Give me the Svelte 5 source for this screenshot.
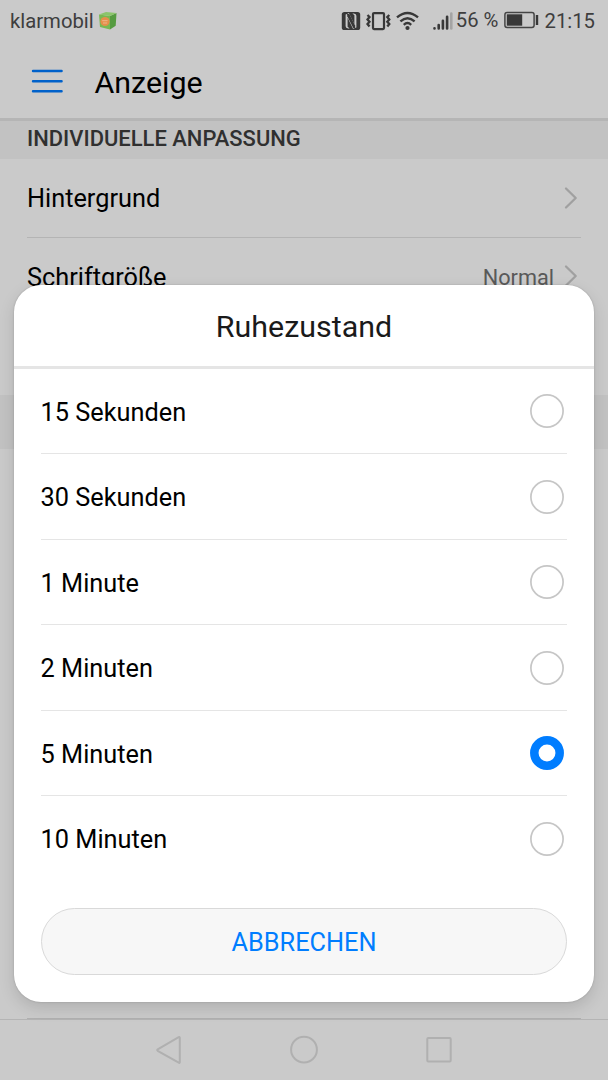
<script>
  const options = ['15 Sekunden', '30 Sekunden', '1 Minute', '2 Minuten', '5 Minuten', '10 Minuten'];
  let selected = $state('5 Minuten');
</script>

{#snippet chevron()}
  <svg class="chevron" width="14" height="24" viewBox="0 0 14 24"><path d="M2 2.500 11.700 12 2 21.500" fill="none" stroke="#a0a0a0" stroke-width="2.300" stroke-linecap="round" stroke-linejoin="round" /></svg>
{/snippet}

<div class="screen">
  <header class="status">
    <span class="carrier">klarmobil</span>
    <svg class="box" width="20" height="20" viewBox="0 0 20 20">
      <path d="M1 3.500 12 5v13.500L2 16z" fill="#78b852" />
      <path d="M12 5l6.500-3-.8 12.800-5.700 3.700z" fill="#559b40" />
      <path d="M1 3.500 8 1l10.500 1L12 5z" fill="#8bc56a" />
      <circle cx="7" cy="10.500" r="4.600" fill="#e58f4b" />
      <path d="M4.200 9.700h5.400M5 12h4.200" stroke="#edb88c" stroke-width="1" />
    </svg>
    <svg class="nfc" width="20" height="20" viewBox="0 0 20 20">
      <rect x=".8" y="1" width="18.400" height="18" rx="2.600" fill="#383838" />
      <path d="M4.600 3.500v11.700q0 1.800 2.600 2.300h1.400l-2-1.800V6.800l5.400 10.900 1.300.1V17L5.900 3zM15.400 16.500V4.800q0-1.800-2.600-2.300h-1.400l2 1.800v8.900L8 2.300l-1.300-.1V3l7.400 14z" fill="#cacaca" />
      <path d="M6.300 3h2l5.800 11.500v2.700h-1.700L6.300 5.300z" fill="#383838" />
    </svg>
    <svg class="vibrate" width="25" height="20" viewBox="0 0 25 20" fill="none" stroke="#383838">
      <rect x="7" y="2.100" width="11" height="16" rx="1" stroke-width="2.200" />
      <path d="M1.500 4 3.500 6 1.500 8.500 3.500 10.800 1.500 13 3.500 15.500M23.300 4 21.300 6 23.300 8.500 21.300 10.800 23.300 13 21.300 15.500" stroke-width="2.300" />
    </svg>
    <svg class="wifi" width="23" height="20" viewBox="0 0 23 20" fill="none" stroke="#383838" stroke-width="2.400">
      <path d="M1 6.300Q11.500-2.400 22 6.300M4.400 10.300Q11.500 4 18.600 10.300M7.800 13.800Q11.500 10.400 15.200 13.800" />
      <circle cx="11.500" cy="17" r="2.100" fill="#383838" stroke="none" />
    </svg>
    <svg class="signal" width="20" height="20" viewBox="0 0 20 20" stroke-width="2.600" stroke-linecap="round">
      <path d="M1.500 17.300v.2M5.700 14v3.500M9.900 9.800v7.700M14.100 5.800v11.700" stroke="#383838" />
      <path d="M18.300 2.500v15" stroke="#a4a4a4" />
    </svg>
    <span class="percent">56 %</span>
    <svg class="battery" width="35" height="18" viewBox="0 0 35 18">
      <rect x=".9" y="1.500" width="29.200" height="15" rx="2.200" fill="none" stroke="#454545" stroke-width="1.500" />
      <rect x="2.800" y="3.300" width="15.400" height="11.400" fill="#383838" />
      <path d="M33 4v10" stroke="#383838" stroke-width="2.400" />
    </svg>
    <span class="clock">21:15</span>
  </header>

  <div class="appbar">
    <svg class="burger" width="32" height="26" viewBox="0 0 32 26"><path d="M2 3h28.600M2 13.200h28.600M2 23.300h28.600" stroke="#0061ca" stroke-width="2.400" stroke-linecap="round" /></svg>
    <h1>Anzeige</h1>
  </div>

  <main>
    <h2>INDIVIDUELLE ANPASSUNG</h2>
    <div class="item"><span class="label">Hintergrund</span>{@render chevron()}</div>
    <div class="item"><span class="label">Schriftgröße</span><span class="value">Normal</span>{@render chevron()}</div>
    <div class="item blank"></div>
    <div class="band"></div>
    <div class="rest"></div>
  </main>

  <nav>
    <svg width="28" height="30" viewBox="0 0 28 30"><path d="M24.800 2.800v24.200q0 1.300-1.100.7L2.700 15.800q-1-.8 0-1.500L23.700 2.100q1.100-.6 1.100.7z" /></svg>
    <svg width="28" height="30" viewBox="0 0 28 30"><circle cx="14" cy="14.700" r="12.900" /></svg>
    <svg width="28" height="30" viewBox="0 0 28 30"><rect x="2.300" y="3" width="23.400" height="23.400" rx="1" /></svg>
  </nav>

  <div class="dialog" role="dialog" aria-labelledby="dialog-title">
    <div class="title" id="dialog-title">Ruhezustand</div>
    <div class="options" role="radiogroup" aria-labelledby="dialog-title">
      {#each options as option}
        <button class="option" role="radio" aria-checked={selected === option} onclick={() => (selected = option)}>
          <span class="label">{option}</span>
          <svg class="radio" class:on={selected === option} width="36" height="36" viewBox="0 0 36 36">
            <circle cx="18" cy="18" r={selected === option ? 12.7 : 16.1} />
          </svg>
        </button>
      {/each}
    </div>
    <button class="cancel"><span class="label">ABBRECHEN</span></button>
  </div>
</div>

<style>
  :global(body) { margin: 0; }
  .screen {
    position: relative;
    box-sizing: border-box;
    width: 608px;
    height: 1080px;
    overflow: hidden;
    display: flex;
    flex-direction: column;
    background: #cacaca;
    color: #000;
    font-family: Roboto, sans-serif;
  }
  .status {
    display: flex;
    align-items: center;
    height: 41px;
    padding: 0 13px 0 10px;
    box-sizing: border-box;
    font-size: 20.3px;
    color: #3e3e3e;
    white-space: nowrap;
    flex: none;
  }
  .status svg { flex: none; }
  .box { margin-left: 4px; }
  .nfc { margin-left: auto; }
  .vibrate { margin-left: 5px; }
  .wifi { margin-left: 5px; }
  .signal { margin-left: 14px; }
  .percent { margin-left: 3px; margin-bottom: 1px; }
  .battery { margin-left: 6px; margin-bottom: 1px; }
  .clock { margin-left: 5px; }

  .appbar {
    display: flex;
    align-items: center;
    height: 77px;
    padding-left: 31px;
    flex: none;
    border-bottom: 3px solid #b5b5b5;
  }
  .burger { margin-top: 3px; }
  h1 {
    margin: 5px 0 0 31.500px;
    font-size: 30.4px;
    font-weight: 400;
  }
  main {
    flex: 1;
    display: flex;
    flex-direction: column;
    min-height: 0;
  }
  h2 {
    box-sizing: border-box;
    height: 38px;
    margin: 0;
    padding-left: 27px;
    background: #c2c2c2;
    color: #303030;
    font-size: 21.950px;
    font-weight: 500;
    line-height: 36px;
    flex: none;
  }
  .item {
    box-sizing: border-box;
    height: 78.500px;
    margin: 0 27px;
    display: flex;
    align-items: center;
    border-bottom: 1px solid #b4b4b4;
    font-size: 25.3px;
    flex: none;
  }
  .label { padding-top: 2px; }
  .item :global(.chevron) { margin: 0 3px 0 auto; }
  .item .value { margin-left: auto; padding-top: 2px; font-size: 21.700px; color: #595959; }
  .item .value + :global(.chevron) { margin-left: 10px; }
  .blank { border: 0; }
  .band { height: 54px; background: #c2c2c2; flex: none; }
  .rest { flex: 1; margin: 0 27px; border-bottom: 1px solid #b0b0b0; }
  nav {
    box-sizing: border-box;
    height: 61px;
    flex: none;
    display: flex;
    justify-content: center;
    align-items: center;
    gap: 107px;
    border-top: 1px solid #b4b4b4;
  }
  nav svg { fill: none; stroke: #b0b0b0; stroke-width: 2; }

  .dialog {
    position: absolute;
    left: 13.600px;
    width: 580.800px;
    top: 284.600px;
    height: 717.400px;
    box-sizing: border-box;
    background: #fff;
    border-radius: 27px;
    box-shadow: 0 0 2px rgba(0, 0, 0, 0.2), 0 6px 16px rgba(0, 0, 0, 0.13);
    display: flex;
    flex-direction: column;
  }
  .title {
    box-sizing: border-box;
    height: 84.400px;
    flex: none;
    display: flex;
    align-items: center;
    justify-content: center;
    padding-top: 2px;
    border-bottom: 3px solid #e5e5e5;
    font-size: 30.4px;
    color: #1a1a1a;
  }
  .options { padding: 0 27px; }
  button { font-family: inherit; margin: 0; cursor: pointer; }
  .option {
    box-sizing: border-box;
    width: 100%;
    height: 85.500px;
    display: flex;
    align-items: center;
    justify-content: space-between;
    padding: 0 2.500px 0 0;
    border: 0;
    border-bottom: 1px solid #e5e5e5;
    background: none;
    color: #000;
    font-size: 25.3px;
  }
  .option:last-child { border-color: transparent; }
  .radio { fill: none; stroke: #c6c6c6; stroke-width: 1.700; }
  .radio.on { stroke: #007dff; stroke-width: 8.500; }
  .cancel {
    box-sizing: border-box;
    height: 67px;
    margin: 26px 27px 0;
    border: 1px solid #d9d9d9;
    border-radius: 34px;
    background: #f7f7f7;
    color: #007dff;
    font-size: 25.3px;
  }
  .cancel .label { display: inline-block; }
</style>
